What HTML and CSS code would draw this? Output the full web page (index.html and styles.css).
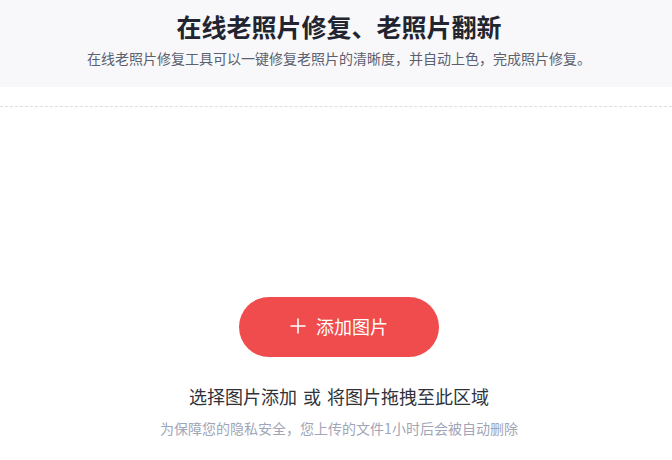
FILE: index.html
```html
<!DOCTYPE html>
<html lang="zh-CN">
<head>
<meta charset="utf-8">
<title>在线老照片修复</title>
<link rel="stylesheet" href="styles.css">
</head>
<body>
<header class="hero">
  <h1 class="hero-title">在线老照片修复、老照片翻新</h1>
  <p class="hero-sub">在线老照片修复工具可以一键修复老照片的清晰度，并自动上色，完成照片修复。</p>
</header>
<section class="upload">
  <button class="upload-btn" type="button">
    <svg class="plus" width="16" height="16" viewBox="0 0 16 16"><path d="M8 0.5V15.5M0.5 8H15.5" stroke="#fff" stroke-width="1.6" fill="none"/></svg>
    <span>添加图片</span>
  </button>
  <p class="upload-hint">选择图片添加 或 将图片拖拽至此区域</p>
  <p class="upload-note">为保障您的隐私安全，您上传的文件1小时后会被自动删除</p>
</section>
</body>
</html>
```
FILE: styles.css
```css
* { box-sizing: border-box; }
html, body { margin: 0; padding: 0; background: #fff; }
body {
  font-family: "Noto Sans CJK SC", "Noto Sans", sans-serif;
}
.hero {
  background: #f8f8fa;
  height: 87px;
  padding: 8px 0 0 6px;
  text-align: center;
}
.hero-title {
  margin: 0;
  font-size: 25px;
  line-height: 36px;
  font-weight: 700;
  color: #22252f;
}
.hero-sub {
  margin: 3px 0 0;
  font-size: 14px;
  line-height: 22px;
  color: #5b5f6e;
}
.upload {
  margin-top: 19px;
  border-top: 1px dashed #dedede;
  padding: 190px 0 0 6px;
  display: flex;
  flex-direction: column;
  align-items: center;
}
.upload-btn {
  width: 200px;
  height: 60px;
  border: 0;
  border-radius: 30px;
  background: #f04c4d;
  color: #fff;
  font-family: inherit;
  font-size: 18px;
  display: flex;
  align-items: center;
  justify-content: center;
  gap: 10px;
  padding: 0 0 2px;
  cursor: pointer;
}
.plus { display: block; }
.upload-hint {
  margin: 26px 0 0;
  font-size: 18px;
  line-height: 26px;
  color: #30323a;
  word-spacing: 2px;
}
.upload-note {
  margin: 9px 0 0;
  font-size: 14px;
  line-height: 20px;
  color: #a0a5b7;
}
```
